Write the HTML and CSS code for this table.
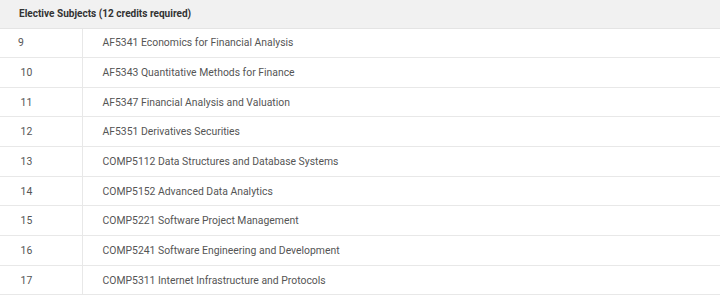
FILE: index.html
```html
<!DOCTYPE html>
<html>
<head>
<meta charset="utf-8">
<link rel="stylesheet" href="styles.css">
</head>
<body>
<table class="subjects">
  <colgroup>
    <col class="col-num">
    <col class="col-name">
  </colgroup>
  <thead>
    <tr><th colspan="2">Elective Subjects (12 credits required)</th></tr>
  </thead>
  <tbody>
    <tr><td class="num">9</td><td>AF5341 Economics for Financial Analysis</td></tr>
    <tr><td class="num">&nbsp;10</td><td>AF5343 Quantitative Methods for Finance</td></tr>
    <tr><td class="num">&nbsp;11</td><td>AF5347 Financial Analysis and Valuation</td></tr>
    <tr><td class="num">&nbsp;12</td><td>AF5351 Derivatives Securities</td></tr>
    <tr><td class="num">&nbsp;13</td><td>COMP5112 Data Structures and Database Systems</td></tr>
    <tr><td class="num">&nbsp;14</td><td>COMP5152 Advanced Data Analytics</td></tr>
    <tr><td class="num">&nbsp;15</td><td>COMP5221 Software Project Management</td></tr>
    <tr><td class="num">&nbsp;16</td><td>COMP5241 Software Engineering and Development</td></tr>
    <tr><td class="num">&nbsp;17</td><td>COMP5311 Internet Infrastructure and Protocols</td></tr>
  </tbody>
</table>
</body>
</html>
```

FILE: styles.css
```css
html, body {
  margin: 0;
  padding: 0;
  background: #ffffff;
}
body {
  font-family: Roboto, "Liberation Sans", Arial, sans-serif;
  font-size: 10.4px;
  color: #555555;
}
.subjects {
  width: 720px;
  border-collapse: collapse;
  table-layout: fixed;
}
.col-num {
  width: 82px;
}
.subjects th {
  background: #f1f1f1;
  color: #333333;
  font-size: 10.05px;
  font-weight: bold;
  text-align: left;
  height: 28px;
  padding: 0 0 0 19px;
  border-bottom: 1px solid #e4e4e4;
  box-sizing: border-box;
}
.subjects td {
  height: 29.67px;
  padding: 0 0 0 20px;
  border-bottom: 1px solid #e8e8e8;
  box-sizing: border-box;
  vertical-align: middle;
}
.subjects td.num {
  padding-left: 18px;
  border-right: 1px solid #e8e8e8;
}
```
